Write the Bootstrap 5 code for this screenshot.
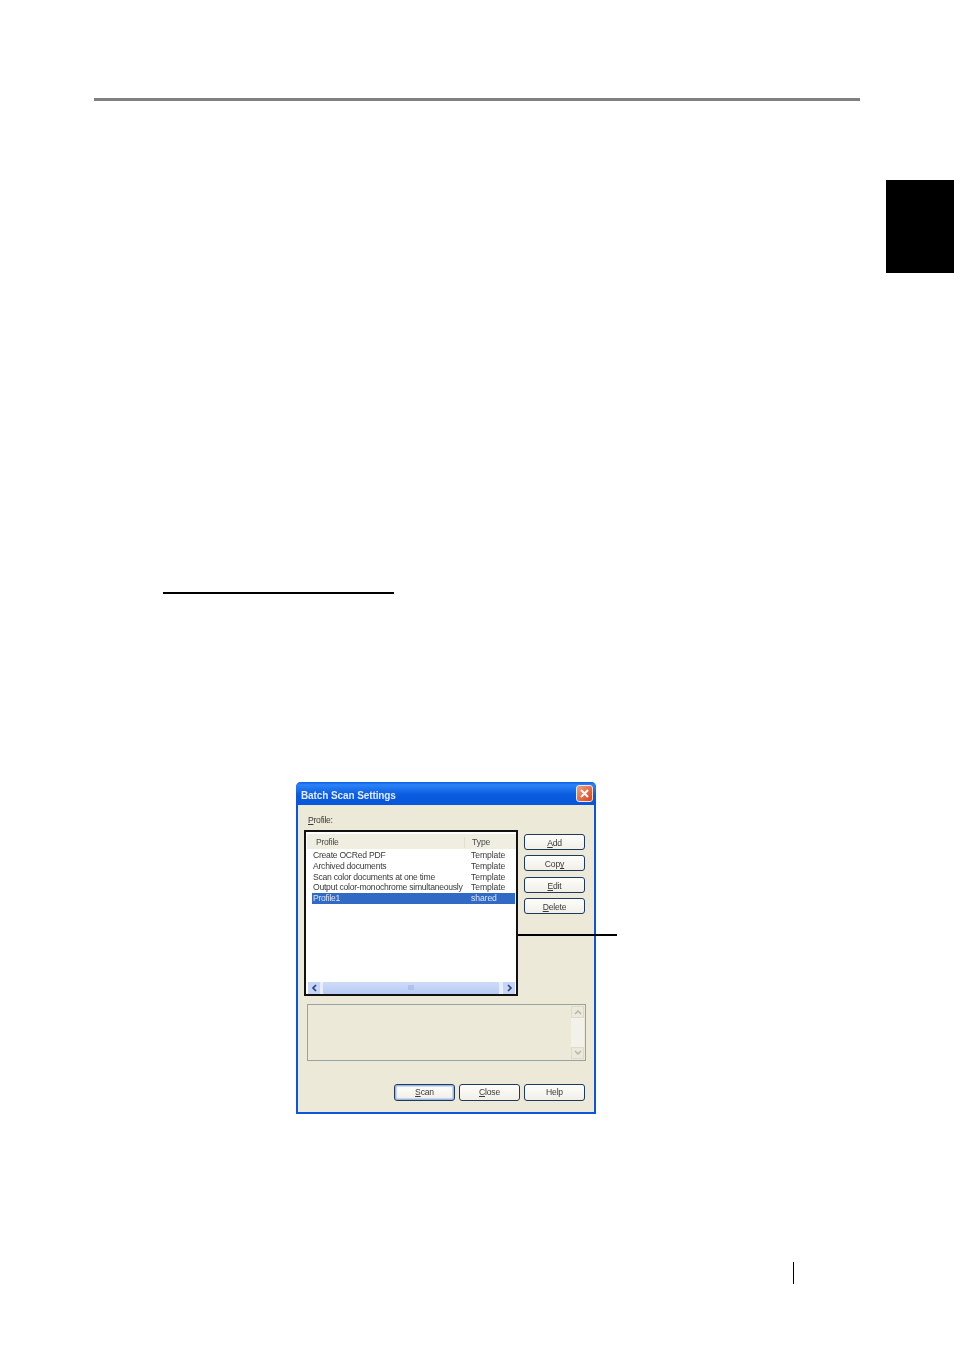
<!DOCTYPE html>
<html lang="en">
<head>
<meta charset="utf-8">
<title>Batch Scan Settings</title>
<link href="https://cdn.jsdelivr.net/npm/bootstrap@5.3.0/dist/css/bootstrap.min.css" rel="stylesheet">
<style>
body{background:#fff;margin:0;font-family:"Liberation Sans",Arial,sans-serif}
.sheet{width:954px;height:1350px;overflow:hidden}
.top-rule{margin:98px 0 0 94px;width:766px;height:3px;background:#808080}
.thumb-tab{margin:79px 0 0 auto;width:68px;height:93px;background:#000}
.head-line{margin:319px 0 0 163px;width:231px;height:2px;background:#000}
.dlg{position:relative;margin:188px 0 0 296px;width:300px;height:332px;background:#ece9d8;border:2px solid #0a55dc;border-top:0;border-radius:5px 5px 0 0;font-size:8.6px;letter-spacing:-.25px;line-height:11px;color:#3a3a3a}
.dlg-title{height:23px;margin:0 -2px;padding:3px 3px 0 5px;border-radius:5px 5px 0 0;background:linear-gradient(#0a5fe6 0,#2c83f5 12%,#0a5ce0 55%,#0655dc 100%);color:#e4ecfb;font-size:10px;font-weight:700;letter-spacing:-.1px}
.dlg-x{width:17px;height:17px;margin-top:-3px;border-radius:3px;background:linear-gradient(135deg,#f0a080,#d8421c);border:1px solid #f3e4de}
.dlg-label{margin:10px 0 3px 10px;height:12px}
.dlg-main{margin-left:6px}
.list-frame{width:214px;height:166px;border:2px solid #111;background:#fff;padding:2px 0 0 1px}
.list-head{height:15px;padding-top:2px;background:#f0eee0;color:#4a4a4a}
.col-name{width:158px;padding-left:1px;white-space:nowrap}
.col-type{flex:1;padding-left:6px;white-space:nowrap;letter-spacing:-.08px}
.list-head .col-name{padding-left:9px;border-right:1px solid #e2dfcf}
.list-head .col-type{padding-left:7px}
.list-body{height:133px;padding-top:1px}
.list-line{height:10.75px;line-height:11px;margin-left:5px;margin-right:1px}
.list-line .col-name{width:153px}
.list-line.on{background:#316ac5;color:#dfe6f5}
.hbar{height:12px;margin:0 1px 0 1px;background:#e8eefb}
.hbar-btn{width:12px;height:12px;background:#c4d5f7;color:#2a3f70}
.hbar-thumb{flex:1;margin:0 4px 0 3px;background:linear-gradient(#cfdcf8,#b7cbf5);border-radius:1px;color:#8aa0d0;font-size:7px;line-height:12px;letter-spacing:0}
.side-btns{margin:4px 0 0 6px;gap:5.3px}
.xp-btn{width:61px;height:16px;padding:0;font-size:8.6px;letter-spacing:-.2px;line-height:16px;color:#3a3a3a;background:linear-gradient(#fdfdfb,#f1efe6);border:1px solid #1c3a5e;border-radius:3px}
.xp-btn.tall{height:17px;line-height:15px}
.xp-btn.main{box-shadow:inset 0 0 0 1.5px #9db8e6}
.desc-box{margin:8px 0 0 9px;width:279px;height:57px;border:1px solid #98a3a0;padding:1px}
.vbar{width:13px;margin-left:auto;background:#f3f2ea}
.vbar-btn{height:12px;background:#ebe9dc;border:1px solid #dcdacb;color:#b3b3a8}
.foot-btns{margin:23px 0 0 0;padding-right:9px;gap:4px}
.leader{position:absolute;left:220px;top:152px;width:99px;height:2px;background:#000}
.page-mark{margin:148px 0 0 793px;width:1px;height:22px;background:#000}
.dlg-title span:first-child,.dlg-label,.list-head,.list-body,.xp-btn,.hbar,.vbar{filter:blur(.3px)}
</style>
</head>
<body>
<div class="sheet">
  <div class="top-rule"></div>
  <div class="thumb-tab"></div>
  <div class="head-line"></div>

  <div class="dlg">
    <div class="dlg-title d-flex align-items-center justify-content-between">
      <span>Batch Scan Settings</span>
      <span class="dlg-x d-flex align-items-center justify-content-center">
        <svg width="11" height="11" viewBox="0 0 11 11"><path d="M2 2l7 7M9 2l-7 7" stroke="#fff" stroke-width="2" fill="none"/></svg>
      </span>
    </div>
    <div class="dlg-label"><u>P</u>rofile:</div>
    <div class="dlg-main d-flex align-items-start">
      <div class="list-frame d-flex flex-column">
        <div class="list-head d-flex align-items-center">
          <div class="col-name">Profile</div>
          <div class="col-type">Type</div>
        </div>
        <div class="list-body">
          <div class="list-line d-flex"><div class="col-name">Create OCRed PDF</div><div class="col-type">Template</div></div>
          <div class="list-line d-flex"><div class="col-name">Archived documents</div><div class="col-type">Template</div></div>
          <div class="list-line d-flex"><div class="col-name">Scan color documents at one time</div><div class="col-type">Template</div></div>
          <div class="list-line d-flex"><div class="col-name">Output color-monochrome simultaneously</div><div class="col-type">Template</div></div>
          <div class="list-line on d-flex"><div class="col-name">Profile1</div><div class="col-type">shared</div></div>
        </div>
        <div class="hbar d-flex">
          <div class="hbar-btn d-flex align-items-center justify-content-center"><svg width="7" height="8" viewBox="0 0 7 8"><path d="M5 1L2 4l3 3" stroke="currentColor" stroke-width="1.6" fill="none"/></svg></div>
          <div class="hbar-thumb text-center">III</div>
          <div class="hbar-btn d-flex align-items-center justify-content-center"><svg width="7" height="8" viewBox="0 0 7 8"><path d="M2 1l3 3-3 3" stroke="currentColor" stroke-width="1.6" fill="none"/></svg></div>
        </div>
      </div>
      <div class="side-btns d-flex flex-column">
        <button type="button" class="btn xp-btn"><u>A</u>dd</button>
        <button type="button" class="btn xp-btn">Cop<u>y</u></button>
        <button type="button" class="btn xp-btn"><u>E</u>dit</button>
        <button type="button" class="btn xp-btn"><u>D</u>elete</button>
      </div>
    </div>
    <div class="desc-box d-flex">
      <div class="vbar d-flex flex-column justify-content-between">
        <div class="vbar-btn d-flex align-items-center justify-content-center"><svg width="8" height="6" viewBox="0 0 8 6"><path d="M1 5l3-3 3 3" stroke="currentColor" stroke-width="1.4" fill="none"/></svg></div>
        <div class="vbar-btn d-flex align-items-center justify-content-center"><svg width="8" height="6" viewBox="0 0 8 6"><path d="M1 1l3 3 3-3" stroke="currentColor" stroke-width="1.4" fill="none"/></svg></div>
      </div>
    </div>
    <div class="foot-btns d-flex justify-content-end">
      <button type="button" class="btn xp-btn tall main"><u>S</u>can</button>
      <button type="button" class="btn xp-btn tall"><u>C</u>lose</button>
      <button type="button" class="btn xp-btn tall">Help</button>
    </div>
    <div class="leader"></div>
  </div>

  <div class="page-mark"></div>
</div>
<script src="https://cdn.jsdelivr.net/npm/bootstrap@5.3.0/dist/js/bootstrap.bundle.min.js"></script>
</body>
</html>
